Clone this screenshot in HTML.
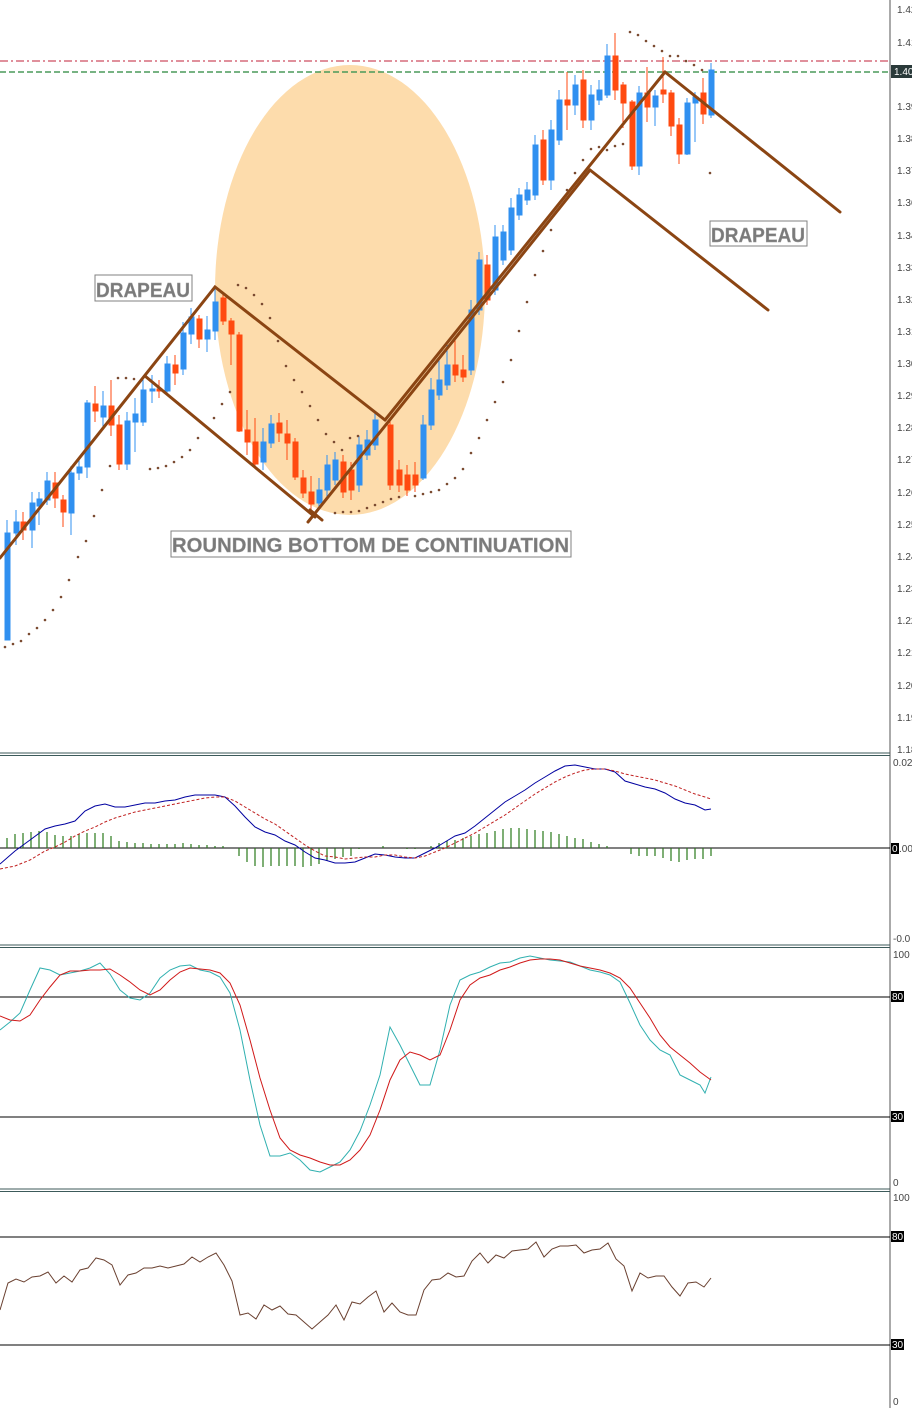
<!DOCTYPE html>
<html><head><meta charset="utf-8"><style>
html,body{margin:0;padding:0;background:#fff;width:912px;height:1408px;overflow:hidden}
svg{display:block;font-family:"Liberation Sans",sans-serif}
.ax{font-size:10px;fill:#444}
.lb{font-size:20px;font-weight:bold;fill:#7a7a7a;stroke:#9a9a9a;stroke-width:0.4}
.b{fill:#3090f0;stroke:#3090f0}
.r{fill:#ff4a10;stroke:#ff4a10}
</style></head><body>
<svg width="912" height="1408" viewBox="0 0 912 1408">
<rect width="912" height="1408" fill="#fff"/>
<ellipse cx="350" cy="290" rx="135" ry="225" fill="#fddcac"/>
<line x1="0" y1="61" x2="890" y2="61" stroke="#c0203a" stroke-width="1" stroke-dasharray="8,3,2,3"/>
<line x1="0" y1="72" x2="890" y2="72" stroke="#4a9a5a" stroke-width="1.5" stroke-dasharray="6,3"/>
<g stroke-width="1">
<line x1="7" y1="520" x2="7" y2="640" class="b"/><rect x="5" y="533" width="5" height="107" class="b"/>
<line x1="16" y1="510" x2="16" y2="545" class="b"/><rect x="14" y="522" width="5" height="11" class="b"/>
<line x1="23" y1="512" x2="23" y2="540" class="r"/><rect x="21" y="522" width="5" height="8" class="r"/>
<line x1="32" y1="492" x2="32" y2="548" class="b"/><rect x="30" y="503" width="5" height="27" class="b"/>
<line x1="39" y1="492" x2="39" y2="525" class="b"/><rect x="37" y="499" width="5" height="7" class="b"/>
<line x1="47" y1="472" x2="47" y2="505" class="b"/><rect x="45" y="481" width="5" height="19" class="b"/>
<line x1="55" y1="472" x2="55" y2="508" class="r"/><rect x="53" y="483" width="5" height="15" class="r"/>
<line x1="63" y1="495" x2="63" y2="527" class="r"/><rect x="61" y="500" width="5" height="12" class="r"/>
<line x1="71" y1="466" x2="71" y2="535" class="b"/><rect x="69" y="473" width="5" height="40" class="b"/>
<line x1="79" y1="458" x2="79" y2="480" class="b"/><rect x="77" y="467" width="5" height="6" class="b"/>
<line x1="87" y1="400" x2="87" y2="478" class="b"/><rect x="85" y="403" width="5" height="64" class="b"/>
<line x1="95" y1="386" x2="95" y2="422" class="r"/><rect x="93" y="404" width="5" height="7" class="r"/>
<line x1="103" y1="391" x2="103" y2="428" class="b"/><rect x="101" y="406" width="5" height="11" class="b"/>
<line x1="111" y1="380" x2="111" y2="436" class="r"/><rect x="109" y="406" width="5" height="19" class="r"/>
<line x1="119" y1="415" x2="119" y2="470" class="r"/><rect x="117" y="425" width="5" height="39" class="r"/>
<line x1="127" y1="412" x2="127" y2="470" class="b"/><rect x="125" y="421" width="5" height="43" class="b"/>
<line x1="135" y1="398" x2="135" y2="452" class="b"/><rect x="133" y="414" width="5" height="8" class="b"/>
<line x1="143" y1="380" x2="143" y2="426" class="b"/><rect x="141" y="390" width="5" height="32" class="b"/>
<line x1="152" y1="375" x2="152" y2="403" class="b"/><rect x="150" y="389" width="5" height="2" class="b"/>
<line x1="159" y1="380" x2="159" y2="398" class="r"/><rect x="157" y="389" width="5" height="2" class="r"/>
<line x1="167" y1="356" x2="167" y2="395" class="b"/><rect x="165" y="364" width="5" height="27" class="b"/>
<line x1="175" y1="355" x2="175" y2="385" class="r"/><rect x="173" y="365" width="5" height="8" class="r"/>
<line x1="183" y1="322" x2="183" y2="375" class="b"/><rect x="181" y="333" width="5" height="36" class="b"/>
<line x1="191" y1="308" x2="191" y2="344" class="b"/><rect x="189" y="317" width="5" height="17" class="b"/>
<line x1="199" y1="315" x2="199" y2="348" class="r"/><rect x="197" y="319" width="5" height="20" class="r"/>
<line x1="207" y1="316" x2="207" y2="352" class="b"/><rect x="205" y="330" width="5" height="9" class="b"/>
<line x1="215" y1="287" x2="215" y2="340" class="b"/><rect x="213" y="302" width="5" height="29" class="b"/>
<line x1="223" y1="292" x2="223" y2="325" class="r"/><rect x="221" y="298" width="5" height="23" class="r"/>
<line x1="231" y1="318" x2="231" y2="365" class="r"/><rect x="229" y="321" width="5" height="13" class="r"/>
<line x1="239" y1="332" x2="239" y2="432" class="r"/><rect x="237" y="335" width="5" height="96" class="r"/>
<line x1="247" y1="410" x2="247" y2="455" class="r"/><rect x="245" y="430" width="5" height="12" class="r"/>
<line x1="255" y1="418" x2="255" y2="466" class="r"/><rect x="253" y="442" width="5" height="22" class="r"/>
<line x1="263" y1="428" x2="263" y2="470" class="b"/><rect x="261" y="442" width="5" height="20" class="b"/>
<line x1="271" y1="415" x2="271" y2="448" class="b"/><rect x="269" y="424" width="5" height="19" class="b"/>
<line x1="279" y1="413" x2="279" y2="442" class="r"/><rect x="277" y="423" width="5" height="10" class="r"/>
<line x1="287" y1="420" x2="287" y2="460" class="r"/><rect x="285" y="434" width="5" height="9" class="r"/>
<line x1="295" y1="438" x2="295" y2="480" class="r"/><rect x="293" y="442" width="5" height="35" class="r"/>
<line x1="303" y1="470" x2="303" y2="498" class="r"/><rect x="301" y="478" width="5" height="15" class="r"/>
<line x1="311" y1="476" x2="311" y2="510" class="r"/><rect x="309" y="492" width="5" height="12" class="r"/>
<line x1="319" y1="478" x2="319" y2="510" class="b"/><rect x="317" y="490" width="5" height="13" class="b"/>
<line x1="327" y1="455" x2="327" y2="500" class="b"/><rect x="325" y="465" width="5" height="25" class="b"/>
<line x1="335" y1="452" x2="335" y2="485" class="b"/><rect x="333" y="460" width="5" height="20" class="b"/>
<line x1="343" y1="455" x2="343" y2="498" class="r"/><rect x="341" y="462" width="5" height="30" class="r"/>
<line x1="351" y1="462" x2="351" y2="500" class="r"/><rect x="349" y="470" width="5" height="20" class="r"/>
<line x1="359" y1="436" x2="359" y2="492" class="b"/><rect x="357" y="445" width="5" height="40" class="b"/>
<line x1="367" y1="430" x2="367" y2="460" class="b"/><rect x="365" y="440" width="5" height="15" class="b"/>
<line x1="375" y1="412" x2="375" y2="450" class="b"/><rect x="373" y="420" width="5" height="25" class="b"/>
<line x1="390" y1="420" x2="390" y2="490" class="r"/><rect x="388" y="425" width="5" height="60" class="r"/>
<line x1="399" y1="460" x2="399" y2="492" class="r"/><rect x="397" y="470" width="5" height="15" class="r"/>
<line x1="407" y1="465" x2="407" y2="496" class="r"/><rect x="405" y="475" width="5" height="15" class="r"/>
<line x1="415" y1="462" x2="415" y2="492" class="r"/><rect x="413" y="475" width="5" height="10" class="r"/>
<line x1="423" y1="415" x2="423" y2="480" class="b"/><rect x="421" y="425" width="5" height="53" class="b"/>
<line x1="431" y1="378" x2="431" y2="430" class="b"/><rect x="429" y="390" width="5" height="35" class="b"/>
<line x1="439" y1="360" x2="439" y2="400" class="b"/><rect x="437" y="380" width="5" height="15" class="b"/>
<line x1="447" y1="345" x2="447" y2="390" class="b"/><rect x="445" y="365" width="5" height="20" class="b"/>
<line x1="455" y1="340" x2="455" y2="382" class="r"/><rect x="453" y="365" width="5" height="10" class="r"/>
<line x1="463" y1="355" x2="463" y2="382" class="r"/><rect x="461" y="370" width="5" height="7" class="r"/>
<line x1="471" y1="300" x2="471" y2="375" class="b"/><rect x="469" y="310" width="5" height="60" class="b"/>
<line x1="479" y1="252" x2="479" y2="315" class="b"/><rect x="477" y="260" width="5" height="50" class="b"/>
<line x1="487" y1="255" x2="487" y2="305" class="r"/><rect x="485" y="265" width="5" height="35" class="r"/>
<line x1="495" y1="225" x2="495" y2="295" class="b"/><rect x="493" y="237" width="5" height="53" class="b"/>
<line x1="503" y1="225" x2="503" y2="265" class="b"/><rect x="501" y="232" width="5" height="28" class="b"/>
<line x1="511" y1="198" x2="511" y2="255" class="b"/><rect x="509" y="208" width="5" height="42" class="b"/>
<line x1="519" y1="188" x2="519" y2="220" class="b"/><rect x="517" y="195" width="5" height="20" class="b"/>
<line x1="527" y1="182" x2="527" y2="205" class="b"/><rect x="525" y="190" width="5" height="10" class="b"/>
<line x1="535" y1="135" x2="535" y2="200" class="b"/><rect x="533" y="145" width="5" height="50" class="b"/>
<line x1="543" y1="130" x2="543" y2="185" class="r"/><rect x="541" y="140" width="5" height="40" class="r"/>
<line x1="551" y1="120" x2="551" y2="190" class="b"/><rect x="549" y="130" width="5" height="50" class="b"/>
<line x1="559" y1="90" x2="559" y2="145" class="b"/><rect x="557" y="100" width="5" height="40" class="b"/>
<line x1="567" y1="72" x2="567" y2="130" class="r"/><rect x="565" y="100" width="5" height="5" class="r"/>
<line x1="575" y1="75" x2="575" y2="115" class="b"/><rect x="573" y="85" width="5" height="20" class="b"/>
<line x1="583" y1="70" x2="583" y2="128" class="r"/><rect x="581" y="80" width="5" height="40" class="r"/>
<line x1="591" y1="85" x2="591" y2="130" class="b"/><rect x="589" y="95" width="5" height="25" class="b"/>
<line x1="599" y1="80" x2="599" y2="105" class="b"/><rect x="597" y="90" width="5" height="10" class="b"/>
<line x1="607" y1="44" x2="607" y2="98" class="b"/><rect x="605" y="56" width="5" height="39" class="b"/>
<line x1="615" y1="33" x2="615" y2="100" class="r"/><rect x="613" y="56" width="5" height="34" class="r"/>
<line x1="623" y1="82" x2="623" y2="128" class="r"/><rect x="621" y="85" width="5" height="18" class="r"/>
<line x1="632" y1="100" x2="632" y2="170" class="r"/><rect x="630" y="102" width="5" height="64" class="r"/>
<line x1="639" y1="86" x2="639" y2="175" class="b"/><rect x="637" y="93" width="5" height="73" class="b"/>
<line x1="647" y1="67" x2="647" y2="122" class="r"/><rect x="645" y="93" width="5" height="14" class="r"/>
<line x1="655" y1="90" x2="655" y2="126" class="b"/><rect x="653" y="96" width="5" height="11" class="b"/>
<line x1="663" y1="57" x2="663" y2="103" class="r"/><rect x="661" y="90" width="5" height="4" class="r"/>
<line x1="671" y1="90" x2="671" y2="136" class="r"/><rect x="669" y="93" width="5" height="33" class="r"/>
<line x1="679" y1="118" x2="679" y2="164" class="r"/><rect x="677" y="125" width="5" height="29" class="r"/>
<line x1="687" y1="98" x2="687" y2="155" class="b"/><rect x="685" y="103" width="5" height="51" class="b"/>
<line x1="695" y1="92" x2="695" y2="142" class="b"/><rect x="693" y="97" width="5" height="6" class="b"/>
<line x1="703" y1="78" x2="703" y2="124" class="r"/><rect x="701" y="93" width="5" height="21" class="r"/>
<line x1="711" y1="63" x2="711" y2="118" class="b"/><rect x="709" y="70" width="5" height="45" class="b"/>
</g>
<g fill="#7a4a30">
<circle cx="5" cy="647" r="1.3"/><circle cx="13" cy="644" r="1.3"/><circle cx="21" cy="641" r="1.3"/><circle cx="29" cy="634" r="1.3"/><circle cx="37" cy="628" r="1.3"/><circle cx="45" cy="620" r="1.3"/><circle cx="53" cy="610" r="1.3"/><circle cx="61" cy="597" r="1.3"/><circle cx="69" cy="580" r="1.3"/><circle cx="78" cy="557" r="1.3"/><circle cx="86" cy="541" r="1.3"/><circle cx="94" cy="516" r="1.3"/><circle cx="102" cy="490" r="1.3"/><circle cx="110" cy="466" r="1.3"/>
<circle cx="118" cy="378" r="1.3"/><circle cx="126" cy="378" r="1.3"/><circle cx="134" cy="379" r="1.3"/>
<circle cx="150" cy="469" r="1.3"/><circle cx="158" cy="468" r="1.3"/><circle cx="166" cy="466" r="1.3"/><circle cx="174" cy="462" r="1.3"/><circle cx="182" cy="457" r="1.3"/><circle cx="190" cy="450" r="1.3"/><circle cx="198" cy="438" r="1.3"/><circle cx="214" cy="418" r="1.3"/><circle cx="222" cy="404" r="1.3"/><circle cx="230" cy="392" r="1.3"/>
<circle cx="238" cy="285" r="1.3"/><circle cx="246" cy="288" r="1.3"/><circle cx="254" cy="295" r="1.3"/><circle cx="262" cy="304" r="1.3"/><circle cx="270" cy="318" r="1.3"/><circle cx="278" cy="341" r="1.3"/><circle cx="286" cy="366" r="1.3"/><circle cx="294" cy="380" r="1.3"/><circle cx="302" cy="392" r="1.3"/><circle cx="310" cy="406" r="1.3"/><circle cx="318" cy="420" r="1.3"/><circle cx="326" cy="434" r="1.3"/><circle cx="334" cy="442" r="1.3"/><circle cx="342" cy="450" r="1.3"/><circle cx="350" cy="438" r="1.3"/><circle cx="358" cy="436" r="1.3"/>
<circle cx="335" cy="513" r="1.3"/><circle cx="343" cy="512" r="1.3"/><circle cx="351" cy="512" r="1.3"/><circle cx="359" cy="511" r="1.3"/><circle cx="367" cy="508" r="1.3"/><circle cx="375" cy="505" r="1.3"/><circle cx="383" cy="502" r="1.3"/><circle cx="391" cy="499" r="1.3"/><circle cx="399" cy="497" r="1.3"/><circle cx="415" cy="496" r="1.3"/><circle cx="423" cy="494" r="1.3"/><circle cx="431" cy="492" r="1.3"/><circle cx="439" cy="490" r="1.3"/><circle cx="447" cy="484" r="1.3"/><circle cx="455" cy="478" r="1.3"/><circle cx="463" cy="469" r="1.3"/><circle cx="471" cy="453" r="1.3"/><circle cx="479" cy="438" r="1.3"/><circle cx="487" cy="420" r="1.3"/><circle cx="495" cy="402" r="1.3"/><circle cx="503" cy="382" r="1.3"/><circle cx="511" cy="360" r="1.3"/><circle cx="519" cy="331" r="1.3"/><circle cx="527" cy="302" r="1.3"/><circle cx="535" cy="275" r="1.3"/><circle cx="543" cy="251" r="1.3"/><circle cx="551" cy="230" r="1.3"/><circle cx="559" cy="209" r="1.3"/><circle cx="567" cy="190" r="1.3"/><circle cx="575" cy="173" r="1.3"/><circle cx="583" cy="160" r="1.3"/><circle cx="591" cy="149" r="1.3"/><circle cx="599" cy="147" r="1.3"/><circle cx="607" cy="150" r="1.3"/><circle cx="615" cy="146" r="1.3"/><circle cx="623" cy="144" r="1.3"/>
<circle cx="630" cy="32" r="1.3"/><circle cx="638" cy="35" r="1.3"/><circle cx="646" cy="41" r="1.3"/><circle cx="654" cy="46" r="1.3"/><circle cx="662" cy="51" r="1.3"/><circle cx="670" cy="56" r="1.3"/><circle cx="678" cy="56" r="1.3"/><circle cx="686" cy="61" r="1.3"/><circle cx="694" cy="65" r="1.3"/><circle cx="702" cy="70" r="1.3"/><circle cx="710" cy="173" r="1.3"/>
</g>
<g stroke="#8b4513" stroke-width="3" fill="none" stroke-linecap="round">
<polyline points="0,558 215,287 385,420"/>
<line x1="145" y1="376" x2="315" y2="517"/>
<line x1="308" y1="522" x2="590" y2="170"/>
<line x1="385" y1="420" x2="665" y2="72"/>
<line x1="590" y1="170" x2="768" y2="310"/>
<line x1="665" y1="72" x2="840" y2="212"/>
<line x1="310" y1="510" x2="322" y2="520"/>
</g>
<rect x="95" y="275" width="97" height="26" fill="#fff" stroke="#808080"/>
<text x="96" y="297" class="lb" textLength="94" lengthAdjust="spacingAndGlyphs">DRAPEAU</text>
<rect x="171" y="531" width="400" height="26" fill="#fff" stroke="#808080"/>
<text x="172" y="552" class="lb" textLength="397" lengthAdjust="spacingAndGlyphs">ROUNDING BOTTOM DE CONTINUATION</text>
<rect x="710" y="221" width="97" height="25" fill="#fff" stroke="#808080"/>
<text x="711" y="242" class="lb" textLength="94" lengthAdjust="spacingAndGlyphs">DRAPEAU</text>
<line x1="890" y1="0" x2="890" y2="1408" stroke="#555" stroke-width="1"/>
<g class="ax">
<text x="897" y="13">1.42</text><text x="897" y="46">1.41</text><text x="897" y="110">1.39</text><text x="897" y="142">1.38</text><text x="897" y="174">1.37</text><text x="897" y="206">1.36</text><text x="897" y="239">1.34</text><text x="897" y="271">1.33</text><text x="897" y="303">1.32</text><text x="897" y="335">1.31</text><text x="897" y="367">1.30</text><text x="897" y="399">1.29</text><text x="897" y="431">1.28</text><text x="897" y="463">1.27</text><text x="897" y="496">1.26</text><text x="897" y="528">1.25</text><text x="897" y="560">1.24</text><text x="897" y="592">1.23</text><text x="897" y="624">1.22</text><text x="897" y="656">1.21</text><text x="897" y="689">1.20</text><text x="897" y="721">1.19</text><text x="897" y="753">1.18</text>
</g>
<rect x="891" y="65" width="21" height="13" fill="#2a3a3a"/><text x="894" y="75" font-size="10" fill="#fff">1.40</text>
<g stroke="#3c5a5a" stroke-width="1"><line x1="0" y1="753" x2="890" y2="753"/><line x1="0" y1="755.5" x2="890" y2="755.5"/><line x1="0" y1="945" x2="890" y2="945"/><line x1="0" y1="947.5" x2="890" y2="947.5"/><line x1="0" y1="1189" x2="890" y2="1189"/><line x1="0" y1="1191.5" x2="890" y2="1191.5"/></g>
<line x1="0" y1="848" x2="890" y2="848" stroke="#000"/>
<g stroke="#2a7a1a" stroke-width="1.2">
<path d="M7 848V838M15 848V834M23 848V833M31 848V832M39 848V831M47 848V832M55 848V835M63 848V836M71 848V836M79 848V834M87 848V833M95 848V833M103 848V833M111 848V836M119 848V841M127 848V842M135 848V843M143 848V843M151 848V844M159 848V844M167 848V844M175 848V844M183 848V843M191 848V844M199 848V845M207 848V845M215 848V846M223 848V846M239 848V856M247 848V862M255 848V866M263 848V867M271 848V866M279 848V866M287 848V866M295 848V866M303 848V867M311 848V866M319 848V864M327 848V861M335 848V859M343 848V857M351 848V856M359 848V849M383 848V846M407 848V849M415 848V849M431 848V846M439 848V843M447 848V841M455 848V840M463 848V838M471 848V836M479 848V834M487 848V833M495 848V831M503 848V829M511 848V828M519 848V828M527 848V829M535 848V830M543 848V831M551 848V832M559 848V834M567 848V836M575 848V838M583 848V839M591 848V842M599 848V844M607 848V846M631 848V854M639 848V856M647 848V856M655 848V856M663 848V858M671 848V861M679 848V862M687 848V860M695 848V859M703 848V859M711 848V856"/>
</g>
<polyline fill="none" stroke="#0000a0" stroke-width="1" points="0,864 15,851 30,840 45,829 55,826 65,824 75,821 85,811 95,806 105,804 115,807 125,807 135,805 145,803 155,803 165,801 175,800 185,797 195,795 205,795 215,795 225,797 235,806 245,817 255,827 265,832 275,835 285,841 295,845 305,852 315,858 325,860 335,863 345,863 355,862 365,858 375,854 385,855 395,857 405,858 415,858 425,853 435,848 445,842 455,836 465,833 475,826 485,818 495,810 505,802 515,796 525,790 535,783 545,777 555,771 565,766 575,765 585,767 595,769 605,769 615,772 625,781 635,784 645,787 655,789 665,793 675,799 685,803 695,805 705,810 711,809"/>
<polyline fill="none" stroke="#c02020" stroke-width="1" stroke-dasharray="3,2" points="0,869 15,866 30,860 45,851 55,847 65,842 75,836 85,831 95,827 105,822 115,818 125,815 135,812 145,810 155,808 165,806 175,804 185,802 195,800 205,798 215,797 225,797 235,801 245,807 255,813 265,819 275,824 285,831 295,838 305,845 315,851 325,856 335,857 345,859 355,858 365,857 375,857 385,855 395,855 405,857 415,858 425,856 435,852 445,848 455,843 465,838 475,833 485,827 495,821 505,815 515,808 525,801 535,794 545,788 555,782 565,777 575,773 585,770 595,769 605,769 615,771 625,774 635,776 645,778 655,780 665,783 675,786 685,790 695,794 705,797 711,799"/>
<text x="893" y="766" class="ax">0.02</text><text x="893" y="942" class="ax">-0.0</text>
<rect x="891" y="843" width="8" height="11" fill="#000"/><text x="892" y="852" font-size="10" fill="#fff">0</text><text x="899" y="852" class="ax">.00</text>
<line x1="0" y1="997" x2="890" y2="997" stroke="#000"/><line x1="0" y1="1117" x2="890" y2="1117" stroke="#000"/>
<polyline fill="none" stroke="#30b0b0" stroke-width="1" points="0,1030 10,1022 20,1013 30,990 40,968 50,970 60,975 70,973 80,971 90,968 100,963 110,974 120,990 130,998 140,1000 150,993 160,978 170,970 180,966 190,965 200,970 210,972 220,977 230,993 240,1030 250,1080 260,1125 270,1156 280,1156 290,1153 300,1160 310,1170 320,1172 330,1167 340,1162 350,1150 360,1131 370,1105 380,1075 390,1027 400,1045 410,1065 420,1085 430,1085 440,1050 450,1005 460,980 470,975 480,972 490,967 500,963 510,962 520,958 530,956 540,958 550,960 560,961 570,962 580,966 590,970 600,972 610,975 620,982 630,1003 640,1025 650,1040 660,1050 670,1055 680,1075 690,1080 700,1085 705,1093 711,1077"/>
<polyline fill="none" stroke="#d01818" stroke-width="1" points="0,1016 10,1020 20,1021 30,1015 40,1000 50,987 60,975 70,971 80,971 90,970 100,970 110,969 120,975 130,982 140,990 150,995 160,990 170,980 180,972 190,968 200,969 210,970 220,973 230,983 240,1005 250,1040 260,1078 270,1110 280,1138 290,1150 300,1155 310,1158 320,1162 330,1165 340,1165 350,1160 360,1150 370,1135 380,1110 390,1080 400,1060 410,1052 420,1055 430,1060 440,1055 450,1030 460,1000 470,985 480,978 490,975 500,970 510,967 520,963 530,960 540,959 550,959 560,960 570,963 580,966 590,968 600,970 610,973 620,978 630,988 640,1003 650,1018 660,1035 670,1047 680,1055 690,1063 700,1072 711,1080"/>
<text x="893" y="958" class="ax">100</text><text x="893" y="1186" class="ax">0</text>
<rect x="891" y="991" width="13" height="11" fill="#000"/><text x="892" y="1000" font-size="10" fill="#fff">80</text>
<rect x="891" y="1111" width="13" height="11" fill="#000"/><text x="892" y="1120" font-size="10" fill="#fff">30</text>
<line x1="0" y1="1237" x2="890" y2="1237" stroke="#000"/><line x1="0" y1="1345" x2="890" y2="1345" stroke="#000"/>
<polyline fill="none" stroke="#6a4030" stroke-width="1" points="0,1310 8,1283 16,1279 24,1282 32,1277 40,1276 48,1272 56,1283 64,1276 72,1282 80,1270 88,1268 96,1258 104,1260 112,1265 120,1285 128,1275 136,1273 144,1268 152,1268 160,1266 168,1268 176,1266 184,1264 192,1257 200,1262 208,1257 216,1253 224,1265 232,1281 240,1315 248,1313 256,1319 264,1305 272,1310 280,1306 288,1314 296,1315 304,1322 312,1329 320,1322 328,1315 336,1305 344,1320 352,1302 360,1304 368,1297 376,1291 384,1312 392,1303 400,1312 408,1315 416,1315 424,1290 432,1280 440,1279 448,1273 456,1277 464,1276 472,1261 480,1253 488,1263 496,1255 504,1258 512,1251 520,1250 528,1249 536,1242 544,1257 552,1249 560,1246 568,1246 576,1245 584,1253 592,1250 600,1249 608,1243 616,1259 624,1266 632,1291 640,1273 648,1278 656,1276 664,1276 672,1287 680,1296 688,1283 696,1282 704,1287 711,1278"/>
<text x="893" y="1201" class="ax">100</text><text x="893" y="1405" class="ax">0</text>
<rect x="891" y="1231" width="13" height="11" fill="#000"/><text x="892" y="1240" font-size="10" fill="#fff">80</text>
<rect x="891" y="1339" width="13" height="11" fill="#000"/><text x="892" y="1348" font-size="10" fill="#fff">30</text>
</svg>
</body></html>
